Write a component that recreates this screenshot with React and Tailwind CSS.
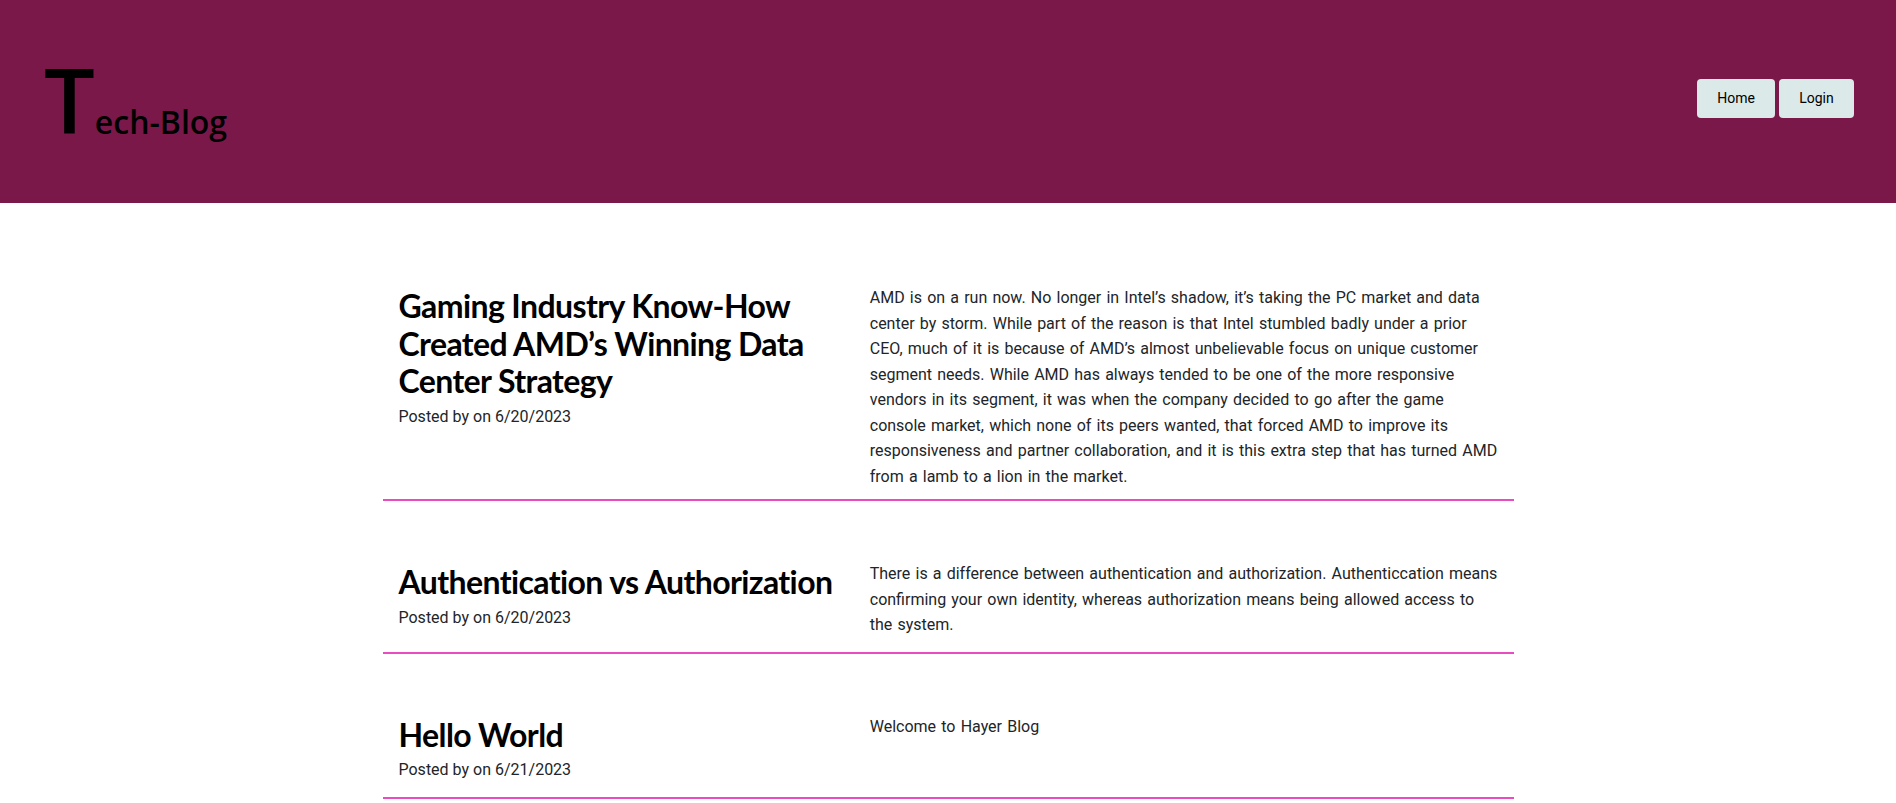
import React from "react";

const posts = [
  {
    title: "Gaming Industry Know-How Created AMD’s Winning Data Center Strategy",
    date: "6/20/2023",
    pad: "pb-[10px]",
    body: "AMD is on a run now. No longer in Intel’s shadow, it’s taking the PC market and data center by storm. While part of the reason is that Intel stumbled badly under a prior CEO, much of it is because of AMD’s almost unbelievable focus on unique customer segment needs. While AMD has always tended to be one of the more responsive vendors in its segment, it was when the company decided to go after the game console market, which none of its peers wanted, that forced AMD to improve its responsiveness and partner collaboration, and it is this extra step that has turned AMD from a lamb to a lion in the market.",
  },
  {
    title: "Authentication vs Authorization",
    date: "6/20/2023",
    pad: "pb-[14px]",
    body: "There is a difference between authentication and authorization. Authenticcation means confirming your own identity, whereas authorization means being allowed access to the system.",
  },
  {
    title: "Hello World",
    date: "6/21/2023",
    pad: "pb-[15px]",
    body: "Welcome to Hayer Blog",
  },
];

export default function App() {
  return (
    <div
      className="min-h-screen bg-white text-[#212529]"
      style={{ fontFamily: 'Roboto, "Open Sans", sans-serif' }}
    >
      <header className="h-[203px] bg-[#7a1849] flex justify-between items-start pl-[44px] pr-[42px]">
        <h1
          className="pt-[54px] text-black font-semibold whitespace-nowrap"
          style={{ fontFamily: '"Open Sans", sans-serif' }}
        >
          <span className="text-[90px] leading-[90px] align-baseline">T</span>
          <span className="text-[32px] leading-[90px] align-baseline">ech-Blog</span>
        </h1>
        <nav className="flex gap-1 pt-[79px]">
          <button className="h-[39px] w-[78px] rounded-[4px] bg-[#dbe9e9] text-black text-[14px]">
            Home
          </button>
          <button className="h-[39px] w-[75px] rounded-[4px] bg-[#dbe9e9] text-black text-[14px]">
            Login
          </button>
        </nav>
      </header>

      <main className="w-[1131px] mx-auto pt-[22px]">
        {posts.map((p) => (
          <article
            key={p.title}
            className={`grid grid-cols-12 pt-[60px] border-b-2 border-[#e84cc0] ${p.pad}`}
          >
            <div className="col-span-5 px-4">
              <h2
                className="mt-[2px] text-[32px] leading-[37.5px] font-bold text-black mb-[5px] tracking-[-0.6px]"
                style={{ fontFamily: 'Lato, "Open Sans", sans-serif' }}
              >
                {p.title}
              </h2>
              <p className="text-[16px] leading-[24px]">Posted by on {p.date}</p>
            </div>
            <div className="col-span-7 px-4">
              <p className="text-[16px] leading-[25.5px] [word-spacing:1.2px]">{p.body}</p>
            </div>
          </article>
        ))}
      </main>
    </div>
  );
}
